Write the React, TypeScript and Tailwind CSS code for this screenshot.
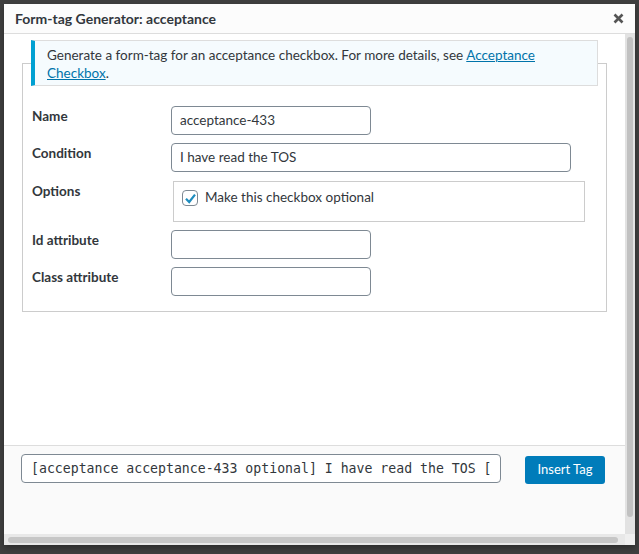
const App = () => {
  const rows = [
    { label: "Name", value: "acceptance-433", wide: false },
    { label: "Condition", value: "I have read the TOS", wide: true },
  ];
  const attrs = ["Id attribute", "Class attribute"];

  return (
    <div className="h-[554px] w-full overflow-hidden bg-[#3f3f3f] p-1 font-['Lato',sans-serif] text-[13.5px] text-[#32373c]">
      <div className="flex h-[541px] w-[631px] flex-col bg-white shadow-[0_3px_6px_rgba(0,0,0,0.3)]">
        <div className="flex h-[30px] shrink-0 items-center justify-between border-b border-[#dddddd] bg-[#fcfcfc] pl-[11px] pr-[11px]">
          <h1 className="text-[14px] font-bold text-[#32373c]">Form-tag Generator: acceptance</h1>
          <svg width="11" height="11" viewBox="0 0 11 11">
            <path d="M1.5 1.5 L9.5 9.5 M9.5 1.5 L1.5 9.5" stroke="#555" strokeWidth="2.6" />
          </svg>
        </div>

        <div className="grid min-h-0 flex-1 grid-cols-[621px_10px] grid-rows-[1fr_11px]">
          <div className="flex min-h-0 flex-col">
            <div className="flex-1 pt-[6px]">
              <fieldset className="ml-[18px] w-[584px] border border-[#cccccc] px-[8px] pb-[15px]">
                <legend className="w-[567px] border border-l-4 border-[#dddddd] border-l-[#00a0d2] bg-[#f5fbfe] px-[12px] py-px">
                  <p className="mt-[4px] mb-[2px] leading-[18px]">
                    Generate a form-tag for an acceptance checkbox. For more details, see{" "}
                    <a href="#" className="text-[#0073aa] underline">
                      Acceptance Checkbox
                    </a>
                    .
                  </p>
                </legend>

                <div className="mt-[20px] flex flex-col">
                  {rows.map((row, i) => (
                    <div key={row.label} className={`flex ${i === 0 ? "" : "mt-[8px]"}`}>
                      <div className="w-[140px] pl-px pt-px font-bold leading-[18px]">{row.label}</div>
                      <div
                        className={`flex h-[29px] items-center rounded-[4px] border border-[#7e8993] bg-white pl-[8px] ${
                          row.wide ? "w-[400px]" : "w-[200px]"
                        }`}
                      >
                        {row.value}
                      </div>
                    </div>
                  ))}

                  <div className="mt-[9px] flex">
                    <div className="w-[142px] pl-px pt-px font-bold leading-[18px]">Options</div>
                    <div className="h-[41px] w-[412px] border border-[#cccccc] pl-[8px] pt-[8px]">
                      <label className="flex items-start gap-[7px]">
                        <span className="flex h-[16px] w-[16px] items-center justify-center rounded-[4px] border border-[#7e8993] bg-white">
                          <svg width="13" height="13" viewBox="0 0 13 13">
                            <path d="M2 6.8 L5.2 10 L11 2.6" fill="none" stroke="#1e8cbe" strokeWidth="2.2" />
                          </svg>
                        </span>
                        <span className="-mt-px leading-[16px]">Make this checkbox optional</span>
                      </label>
                    </div>
                  </div>

                  {attrs.map((label) => (
                    <div key={label} className="mt-[8px] flex">
                      <div className="w-[140px] pl-px pt-px font-bold leading-[18px]">{label}</div>
                      <div className="h-[29px] w-[200px] rounded-[4px] border border-[#7e8993] bg-white" />
                    </div>
                  ))}
                </div>
              </fieldset>
            </div>

            <div className="flex h-[89px] shrink-0 items-start border-t border-[#dddddd] bg-[#fafafa] pl-[17px] pt-[8px]">
              <div className="flex h-[29px] w-[480px] items-center rounded-[4px] border border-[#7e8993] bg-white pl-[9px] pr-[8px] font-['DejaVu_Sans_Mono',monospace] text-[13.2px]">
                <div className="min-w-0 flex-1 overflow-hidden whitespace-nowrap">
                  [acceptance acceptance-433 optional] I have read the TOS [/acceptance]
                </div>
              </div>
              <button className="ml-[24px] mt-[2px] h-[28px] w-[80px] rounded-[3px] bg-[#007cba] text-[13px] text-white">
                Insert Tag
              </button>
            </div>
          </div>

          <div className="flex justify-center bg-[#e2e2e2] pt-[3px] pb-[17px]">
            <div className="h-full w-[6px] rounded-full bg-[#c1c1c1]" />
          </div>

          <div className="flex items-center bg-[#e8e8e8] px-[4px]">
            <div className="h-[6px] w-[610px] rounded-full bg-[#c6c6c6]" />
          </div>
          <div className="bg-[#efefef]" />
        </div>
      </div>
    </div>
  );
};

export default App;
